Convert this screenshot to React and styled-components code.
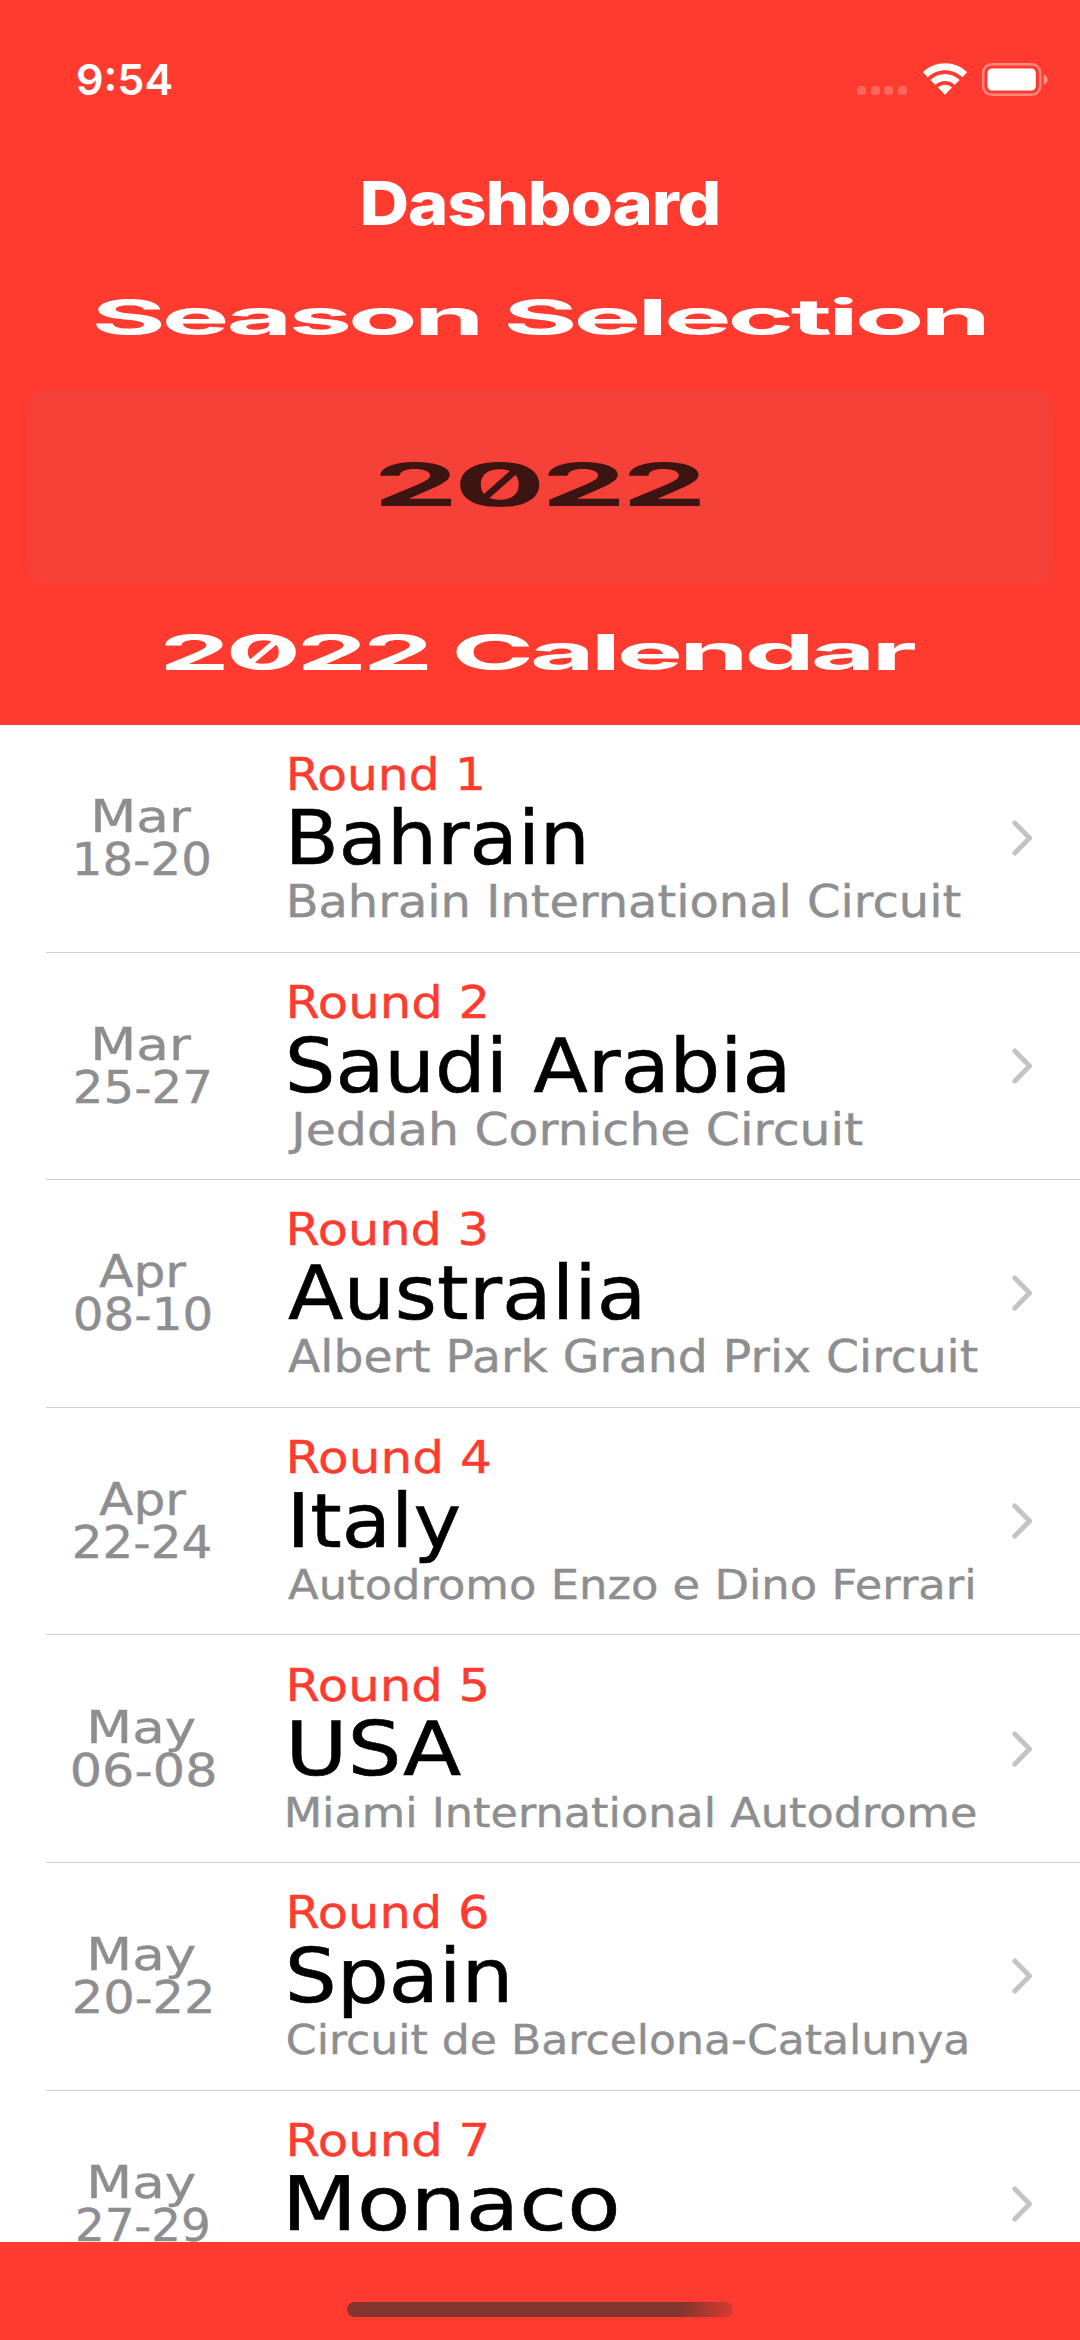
import React, { useLayoutEffect, useRef, useState } from "react";
import styled, { createGlobalStyle } from "styled-components";

const RED = "#ff3b30";
const GREY = "#8e8e90";

const GlobalStyle = createGlobalStyle`
  *, *::before, *::after { box-sizing: border-box; }
  html, body { margin: 0; padding: 0; background: ${RED}; }
`;

const Screen = styled.div`
  display: flex;
  flex-direction: column;
  width: 1080px;
  height: 2340px;
  overflow: hidden;
  background: ${RED};
`;

const Header = styled.header`
  flex: none;
  display: flex;
  flex-direction: column;
  align-items: center;
  height: 725px;
  color: #fff;
  font-family: Inter, "Liberation Sans", sans-serif;
`;

const StatusBar = styled.div`
  display: flex;
  align-items: center;
  justify-content: space-between;
  width: 100%;
  height: 158px;
  padding: 0 31px 0 78px;
`;

const StatusIcons = styled.div`
  display: flex;
  align-items: center;
`;

const SignalDots = styled.div`
  display: flex;
  gap: 4.5px;
  padding: 22px 15px 0 0;
`;

const Dot = styled.i`
  width: 9px;
  height: 9px;
  border-radius: 3.5px;
  background: rgba(255, 255, 255, 0.22);
`;

const WifiIcon = styled.svg`
  width: 46px;
  height: 34px;
  margin-right: 14.5px;
`;

const BatteryIcon = styled.svg`
  width: 67px;
  height: 33px;
`;

/* The outer box takes the drawn width; the inner span is stretched to fill it. */
const FitBox = styled.div`
  flex: none;
  width: ${(p) => p.$width}px;
  height: ${(p) => p.$height}px;
  margin-left: ${(p) => p.$inset || 0}px;
  white-space: nowrap;
`;

const FitSpan = styled.span`
  display: inline-block;
  transform-origin: 0 50%;
  vertical-align: top;
`;

function FitText({ width, height, inset, className, children }) {
  const ref = useRef(null);
  const [transform, setTransform] = useState("none");

  useLayoutEffect(() => {
    const measure = () => {
      const style = getComputedStyle(ref.current);
      const ctx = document.createElement("canvas").getContext("2d");
      ctx.font = `${style.fontWeight} ${style.fontSize} ${style.fontFamily}`;
      if (style.letterSpacing !== "normal") ctx.letterSpacing = style.letterSpacing;
      const m = ctx.measureText(ref.current.textContent);
      const ink = m.actualBoundingBoxRight + m.actualBoundingBoxLeft;
      const scale = width / ink;
      setTransform(`translateX(${m.actualBoundingBoxLeft * scale}px) scaleX(${scale})`);
    };
    measure();
    document.fonts.ready.then(() => ref.current && measure());
  }, [width, children]);

  return (
    <FitBox className={className} $width={width} $height={height} $inset={inset}>
      <FitSpan ref={ref} style={{ transform }}>{children}</FitSpan>
    </FitBox>
  );
}

const Clock = styled(FitText)`
  font-size: 43px;
  font-weight: 600;
  line-height: 54px;
`;

const ScreenTitle = styled(FitText)`
  font-size: 60px;
  font-weight: 800;
  letter-spacing: -1px;
  line-height: 90px;
`;

const SectionTitle = styled(FitText)`
  font-size: 50px;
  font-weight: 650;
  letter-spacing: -1.8px;
  line-height: 70px;
  font-feature-settings: "zero" 1;
`;

const SectionSlot = styled.div`
  padding: 34px 0 37px;
`;

const SeasonPicker = styled.div`
  display: flex;
  align-items: center;
  justify-content: center;
  width: 1026px;
  height: 194px;
  padding-bottom: 3px;
  border-radius: 20px;
  background: #f54137;
  color: #3c1411;
`;

const SeasonValue = styled(FitText)`
  font-size: 59px;
  font-weight: 650;
  letter-spacing: -2px;
  line-height: 70px;
  font-feature-settings: "zero" 1;
`;

const RaceList = styled.main`
  flex: none;
  height: 1517px;
  overflow: hidden;
  background: #fff;
  font-family: "DejaVu Sans", "Liberation Sans", sans-serif;
`;

const RaceRow = styled.section`
  display: grid;
  grid-template-columns: 193.5px 1fr 68px;
  align-items: center;
  height: 227.6px;
  margin-left: 46px;
  border-bottom: 1px solid #d0d0d2;
`;

const DateColumn = styled.div`
  display: flex;
  flex-direction: column;
  align-items: center;
  color: ${GREY};
`;

const DateText = styled(FitText)`
  font-size: 45px;
  line-height: 43px;
  -webkit-text-stroke: 0.4px currentColor;
`;

const RaceInfo = styled.div`
  padding-left: 48px;
`;

const RoundLabel = styled(FitText)`
  color: ${RED};
  font-size: 45px;
  line-height: 43px;
  -webkit-text-stroke: 0.4px currentColor;
`;

const Country = styled(FitText)`
  color: #000;
  font-size: 75px;
  line-height: 84px;
  -webkit-text-stroke: 0.6px currentColor;
`;

const Circuit = styled(FitText)`
  padding-top: ${(p) => (p.$compact ? 1 : 0)}px;
  color: ${GREY};
  font-size: ${(p) => (p.$compact ? 41 : 44)}px;
  line-height: 43px;
  -webkit-text-stroke: 0.4px currentColor;
`;

const Chevron = styled.svg`
  width: 22px;
  height: 36px;
`;

const Footer = styled.footer`
  flex: 1;
  display: flex;
  justify-content: center;
  padding-top: 60px;
`;

const HomeIndicator = styled.div`
  width: 386px;
  height: 15px;
  border-radius: 8px;
  background: linear-gradient(100deg, #823630 0%, #823630 86%, #c53a31 97%, #d83b32 100%);
`;

const races = [
  { month: ["Mar", 96.5], days: ["18-20", 133], round: ["Round 1", 192], country: ["Bahrain", 292, 4.5], circuit: ["Bahrain International Circuit", 671, 2] },
  { month: ["Mar", 96.5], days: ["25-27", 133], round: ["Round 2", 196], country: ["Saudi Arabia", 496, 1], circuit: ["Jeddah Corniche Circuit", 575, 0.5] },
  { month: ["Apr", 87.5], days: ["08-10", 135.5], round: ["Round 3", 196], country: ["Australia", 352, 0], circuit: ["Albert Park Grand Prix Circuit", 690, 0] },
  { month: ["Apr", 87.5], days: ["22-24", 135.5], round: ["Round 4", 200], country: ["Italy", 165.5, 6.5], circuit: ["Autodromo Enzo e Dino Ferrari", 685, 0], compact: true },
  { month: ["May", 104.5], days: ["06-08", 142.5], round: ["Round 5", 196], country: ["USA", 169, 4.5], circuit: ["Miami International Autodrome", 688, 0.5], compact: true },
  { month: ["May", 104.5], days: ["20-22", 136.5], round: ["Round 6", 196.5], country: ["Spain", 218.5, 1], circuit: ["Circuit de Barcelona-Catalunya", 679, 0.5], compact: true },
  { month: ["May", 104.5], days: ["27-29", 130], round: ["Round 7", 196], country: ["Monaco", 326, 2], circuit: ["Circuit de Monaco", 420, 0.5] },
];

function Race({ race }) {
  return (
    <RaceRow>
      <DateColumn>
        <DateText width={race.month[1]} height={43}>{race.month[0]}</DateText>
        <DateText width={race.days[1]} height={43}>{race.days[0]}</DateText>
      </DateColumn>
      <RaceInfo>
        <RoundLabel width={race.round[1]} height={43} inset={2}>{race.round[0]}</RoundLabel>
        <Country width={race.country[1]} height={84} inset={race.country[2]}>{race.country[0]}</Country>
        <Circuit width={race.circuit[1]} height={43} inset={race.circuit[2]} $compact={race.compact}>
          {race.circuit[0]}
        </Circuit>
      </RaceInfo>
      <Chevron viewBox="0 0 22 36" fill="none" stroke="#c4c4c6" strokeWidth="5" strokeLinecap="round" strokeLinejoin="round">
        <path d="M2.8 3L17.6 18L2.8 33" />
      </Chevron>
    </RaceRow>
  );
}

export default function App() {
  return (
    <>
      <GlobalStyle />
      <Screen>
        <Header>
          <StatusBar>
            <Clock width={93.5} height={54}>9:54</Clock>
            <StatusIcons>
              <SignalDots><Dot /><Dot /><Dot /><Dot /></SignalDots>
              <WifiIcon viewBox="0 0 46 34" fill="#fff">
                <path d="M0.8 10.3C13 -1.8 33 -1.8 45.2 10.3L40.2 15.3C30.8 6 15.2 6 5.8 15.3Z" />
                <path d="M8.3 17.9C16.5 9.9 29.5 9.9 37.7 17.9L32.7 22.8C27.3 17.6 18.7 17.6 13.3 22.8Z" />
                <path d="M16 25.6C20 21.9 26 21.9 30 25.6L23 32.8Z" />
              </WifiIcon>
              <BatteryIcon viewBox="0 0 67 33">
                <rect x="1.2" y="1.2" width="57" height="30.6" rx="8.5" fill="none" stroke="#fff" strokeOpacity="0.4" strokeWidth="2.4" />
                <rect x="5.5" y="5.5" width="48.3" height="22" rx="4.5" fill="#fff" />
                <path d="M61.5 11.5C67 13 67 20 61.5 21.5Z" fill="#fff" fillOpacity="0.45" />
              </BatteryIcon>
            </StatusIcons>
          </StatusBar>
          <ScreenTitle width={354.5} height={90}>Dashboard</ScreenTitle>
          <SectionSlot>
            <SectionTitle width={888} height={70}>Season Selection</SectionTitle>
          </SectionSlot>
          <SeasonPicker>
            <SeasonValue width={320} height={70}>2022</SeasonValue>
          </SeasonPicker>
          <SectionSlot>
            <SectionTitle width={752} height={70}>2022 Calendar</SectionTitle>
          </SectionSlot>
        </Header>
        <RaceList>
          {races.map((race) => <Race key={race.round[0]} race={race} />)}
        </RaceList>
        <Footer>
          <HomeIndicator />
        </Footer>
      </Screen>
    </>
  );
}
